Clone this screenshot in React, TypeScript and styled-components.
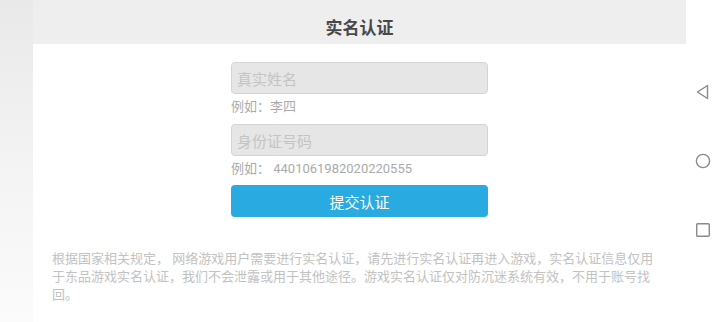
import React from "react";
import styled, { createGlobalStyle } from "styled-components";

const Global = createGlobalStyle`
  html, body { margin: 0; padding: 0; background: #ffffff; }
  body { font-family: Roboto, "Noto Sans CJK SC", sans-serif; }
  * { box-sizing: border-box; }
`;

const Screen = styled.div`
  display: flex;
  width: 720px;
  height: 322px;
  overflow: hidden;
  background: #ffffff;
`;

const SideStrip = styled.div`
  width: 33px;
  flex: none;
  background: linear-gradient(to bottom, #e9e9e9 0%, #f3f3f3 50%, #fbfbfb 100%);
`;

const Dialog = styled.div`
  flex: 1;
  display: flex;
  flex-direction: column;
  background: #ffffff;
`;

const Header = styled.div`
  height: 44px;
  display: flex;
  align-items: center;
  justify-content: center;
  background: #eeeeee;
  color: #484848;
  font-size: 17px;
  font-weight: bold;
  padding-top: 8px;
`;

const Form = styled.div`
  width: 257px;
  margin: 18px auto 0;
  display: flex;
  flex-direction: column;
`;

const Field = styled.div`
  height: 32px;
  border: 1px solid #d4d4d4;
  border-radius: 4px;
  background: #e6e6e6;
  display: flex;
  align-items: center;
  padding-left: 5px;
  color: #c4c4c4;
  font-size: 15px;
`;

const Hint = styled.div<{ $after: number }>`
  margin-top: 4px;
  margin-bottom: ${(p) => p.$after}px;
  line-height: 18px;
  font-size: 13px;
  color: #ababab;
  white-space: pre;
`;

const Submit = styled.div`
  height: 32px;
  border-radius: 4px;
  background: #29abe2;
  color: #ffffff;
  font-size: 15px;
  display: flex;
  align-items: center;
  justify-content: center;
`;

const Notice = styled.p`
  margin: 33px 28px 0 19px;
  font-size: 13px;
  line-height: 18px;
  color: #c2c2c2;
`;

const NavBar = styled.div`
  width: 34px;
  flex: none;
  display: flex;
  flex-direction: column;
  align-items: center;
  padding-top: 84px;
  gap: 53px;
`;

const NavIcon = styled.svg`
  width: 16px;
  height: 16px;
  display: block;
`;

export default function App() {
  return (
    <>
      <Global />
      <Screen>
        <SideStrip />
        <Dialog>
          <Header>实名认证</Header>
          <Form>
            <Field>真实姓名</Field>
            <Hint $after={8}>例如：李四</Hint>
            <Field>身份证号码</Field>
            <Hint $after={7}>例如： 4401061982020220555</Hint>
            <Submit>提交认证</Submit>
          </Form>
          <Notice>
            根据国家相关规定， 网络游戏用户需要进行实名认证，请先进行实名认证再进入游戏，实名认证信息仅用于东品游戏实名认证，我们不会泄露或用于其他途径。游戏实名认证仅对防沉迷系统有效，不用于账号找回。
          </Notice>
        </Dialog>
        <NavBar>
          <NavIcon viewBox="0 0 16 16">
            <path d="M12.5 1.5 L2.5 8 L12.5 14.5 Z" fill="none" stroke="#8a8a8a" strokeWidth="1.4" strokeLinejoin="round" />
          </NavIcon>
          <NavIcon viewBox="0 0 16 16">
            <circle cx="8" cy="8" r="6.6" fill="none" stroke="#8a8a8a" strokeWidth="1.4" />
          </NavIcon>
          <NavIcon viewBox="0 0 16 16">
            <rect x="1.7" y="1.7" width="12.6" height="12.6" rx="1" fill="none" stroke="#8a8a8a" strokeWidth="1.4" />
          </NavIcon>
        </NavBar>
      </Screen>
    </>
  );
}
